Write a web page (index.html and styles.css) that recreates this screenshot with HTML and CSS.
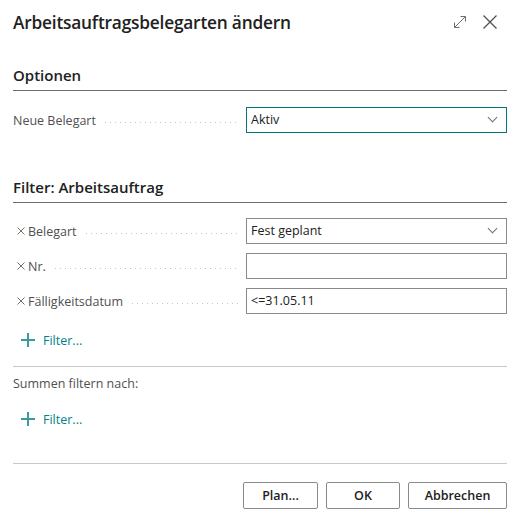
FILE: index.html
```html
<!DOCTYPE html>
<html lang="de">
<head>
    <meta charset="UTF-8">
    <title>Arbeitsauftragsbelegarten ändern</title>
    <link rel="stylesheet" href="styles.css">
</head>
<body>
    <div class="dialog">
        <div class="dialog-header">
            <h1>Arbeitsauftragsbelegarten ändern</h1>
            <div class="header-icons">
                <svg class="icon-expand" width="16" height="16" viewBox="0 0 16 16">
                    <path d="M2.5 13.5 L13.5 2.5 M8.5 2.5 H13.5 V7.5 M2.5 8.5 V13.5 H7.5" fill="none" stroke="#707070" stroke-width="1"/>
                </svg>
                <svg class="icon-close" width="16" height="16" viewBox="0 0 16 16">
                    <path d="M1.5 1.5 L14.5 14.5 M14.5 1.5 L1.5 14.5" fill="none" stroke="#505050" stroke-width="1.3"/>
                </svg>
            </div>
        </div>

        <h2 class="group-title first">Optionen</h2>
        <div class="field-row first-row">
            <div class="field-label"><span>Neue Belegart</span><i class="leader"></i></div>
            <div class="field-box select focused">Aktiv<span class="chevron"></span></div>
        </div>

        <h2 class="group-title second">Filter: Arbeitsauftrag</h2>
        <div class="filter-rows">
            <div class="field-row">
                <div class="field-label">
                    <svg class="remove" width="8" height="8" viewBox="0 0 8 8"><path d="M0.5 0.5 L7.5 7.5 M7.5 0.5 L0.5 7.5" stroke="#707070" stroke-width="1" fill="none"/></svg>
                    <span>Belegart</span><i class="leader"></i>
                </div>
                <div class="field-box select">Fest geplant<span class="chevron"></span></div>
            </div>
            <div class="field-row">
                <div class="field-label">
                    <svg class="remove" width="8" height="8" viewBox="0 0 8 8"><path d="M0.5 0.5 L7.5 7.5 M7.5 0.5 L0.5 7.5" stroke="#707070" stroke-width="1" fill="none"/></svg>
                    <span>Nr.</span><i class="leader"></i>
                </div>
                <div class="field-box"></div>
            </div>
            <div class="field-row">
                <div class="field-label">
                    <svg class="remove" width="8" height="8" viewBox="0 0 8 8"><path d="M0.5 0.5 L7.5 7.5 M7.5 0.5 L0.5 7.5" stroke="#707070" stroke-width="1" fill="none"/></svg>
                    <span>Fälligkeitsdatum</span><i class="leader"></i>
                </div>
                <div class="field-box">&lt;=31.05.11</div>
            </div>
        </div>
        <a class="add-filter top-filter" href="#"><span class="plus"></span>Filter...</a>

        <hr class="divider">
        <div class="totals-label">Summen filtern nach:</div>
        <a class="add-filter" href="#"><span class="plus"></span>Filter...</a>

        <hr class="divider footer-line">
        <div class="buttons">
            <button class="btn btn-plan">Plan...</button>
            <button class="btn btn-ok">OK</button>
            <button class="btn btn-cancel">Abbrechen</button>
        </div>
    </div>
</body>
</html>
```

FILE: styles.css
```css
body {
    margin: 0;
    background: #ffffff;
    font-family: "Open Sans", "Noto Sans", Arial, sans-serif;
    color: #212121;
}
.dialog {
    width: 494px;
    padding: 0 14px 0 13px;
}
.dialog-header {
    display: flex;
    align-items: center;
    justify-content: space-between;
    height: 44px;
}
h1 {
    margin: 0;
    font-size: 17.3px;
    font-weight: 600;
    letter-spacing: -0.2px;
    color: #212121;
}
.header-icons {
    display: flex;
    align-items: center;
    gap: 14px;
    margin-right: 9px;
    margin-top: -1px;
}
.group-title {
    margin: 0;
    font-size: 15px;
    font-weight: 600;
    line-height: 20px;
    padding-bottom: 5px;
    border-bottom: 1px solid #6b6b6b;
    color: #212121;
}
.group-title.first {
    margin-top: 21px;
}
.group-title.second {
    margin-top: 44px;
}
.field-row {
    display: grid;
    grid-template-columns: 233px 1fr;
    align-items: center;
    height: 26px;
}
.first-row {
    margin-top: 16px;
}
.filter-rows {
    display: flex;
    flex-direction: column;
    gap: 9px;
    margin-top: 15px;
}
.field-label {
    display: flex;
    align-items: center;
    font-size: 12.5px;
    color: #505050;
    padding-right: 6px;
}
.remove {
    flex: none;
    margin: 0 3px 0 4px;
}
.leader {
    flex: 1;
    height: 1px;
    margin: 4px 0 0 9px;
    background-image: linear-gradient(to right, #c6c6c6 1px, transparent 1px);
    background-size: 5px 1px;
    background-repeat: repeat-x;
}
.field-box {
    position: relative;
    box-sizing: border-box;
    height: 26px;
    border: 1px solid #8a8a8a;
    padding: 0 4px;
    font-size: 12.5px;
    line-height: 24px;
    color: #212121;
}
.field-box.focused {
    border-color: #00757c;
}
.chevron {
    position: absolute;
    right: 10px;
    top: 6px;
    width: 6px;
    height: 6px;
    border-right: 1px solid #707070;
    border-bottom: 1px solid #707070;
    transform: rotate(45deg);
}
.add-filter {
    display: flex;
    align-items: center;
    height: 20px;
    margin-top: 15px;
    padding-left: 8px;
    font-size: 12.5px;
    color: #00838a;
    text-decoration: none;
}
.top-filter {
    margin-top: 16px;
}
.plus {
    position: relative;
    width: 14px;
    height: 14px;
    margin-right: 8px;
}
.plus::before,
.plus::after {
    content: "";
    position: absolute;
    background: #3a9a9f;
}
.plus::before {
    left: 0;
    right: 0;
    top: 6px;
    height: 1.5px;
}
.plus::after {
    top: 0;
    bottom: 0;
    left: 6px;
    width: 1.5px;
}
.divider {
    margin: 16px 0 0 0;
    border: none;
    border-top: 1px solid #c8c8c8;
}
.totals-label {
    margin-top: 7px;
    font-size: 12.5px;
    line-height: 20px;
    color: #505050;
}
.footer-line {
    margin-top: 34px;
}
.buttons {
    display: flex;
    justify-content: flex-end;
    gap: 8px;
    margin-top: 18px;
}
.btn {
    height: 27px;
    box-sizing: border-box;
    background: #ffffff;
    border: 1px solid #8a8a8a;
    border-radius: 2px;
    font-family: "Open Sans", "Noto Sans", Arial, sans-serif;
    font-size: 12.5px;
    font-weight: 600;
    color: #212121;
    padding: 0;
}
.btn-plan {
    width: 75px;
}
.btn-ok {
    width: 74px;
}
.btn-cancel {
    width: 99px;
}
```
